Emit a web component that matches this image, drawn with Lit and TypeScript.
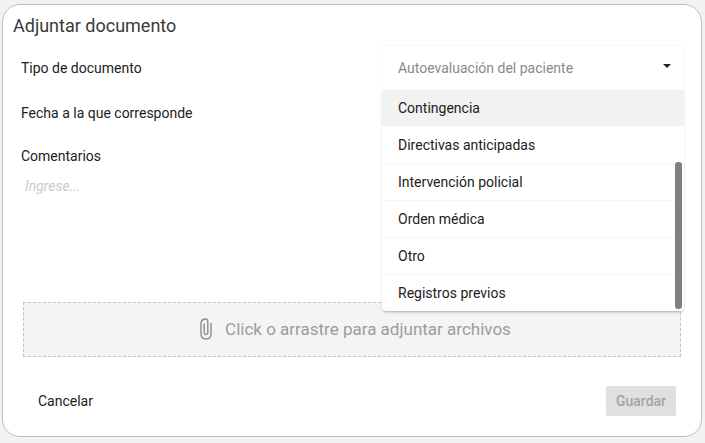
import { LitElement, html, css } from 'lit';
import { customElement } from 'lit/decorators.js';

const options = [
  'Contingencia',
  'Directivas anticipadas',
  'Intervención policial',
  'Orden médica',
  'Otro',
  'Registros previos',
];

@customElement('app-root')
export class AppRoot extends LitElement {
  static styles = css`
    :host {
      display: block;
      width: 705px;
      height: 443px;
      box-sizing: border-box;
      padding: 4px 3px 6px 2px;
      background: #f2f2f2;
      font-family: Roboto, 'Liberation Sans', sans-serif;
      font-size: 14px;
      color: #212121;
    }
    .card {
      box-sizing: border-box;
      height: 433px;
      display: flex;
      flex-direction: column;
      background: #fff;
      border: 1px solid #bdbdbd;
      border-radius: 18px;
      padding: 0 25px 20px 18px;
    }
    .title {
      margin: 0 0 0 -8px;
      padding-top: 10px;
      font-size: 18px;
      font-weight: 400;
      line-height: 21px;
      color: #3a3a3a;
    }
    .form {
      display: grid;
      grid-template-columns: 361px 302px;
      height: 255px;
      margin-right: -8px;
    }
    .left {
      display: flex;
      flex-direction: column;
      padding-top: 23px;
    }
    .label {
      line-height: 18px;
    }
    .label.date {
      margin-top: 27px;
    }
    .label.notes {
      margin-top: 25px;
    }
    .hint {
      margin: 12px 0 0 4px;
      line-height: 18px;
      font-style: italic;
      color: #cbcbcb;
    }
    .right {
      position: relative;
      padding-top: 10px;
    }
    .select {
      box-sizing: border-box;
      height: 44px;
      display: flex;
      align-items: center;
      justify-content: space-between;
      padding: 0 13px 0 16px;
      background: #fff;
      color: #8a8a8a;
      box-shadow: 0 -1px 1px rgba(0, 0, 0, 0.03), 1px 0 1px rgba(0, 0, 0, 0.02), -1px 0 1px rgba(0, 0, 0, 0.02);
    }
    .arrow {
      width: 0;
      height: 0;
      margin-bottom: 5px;
      border-left: 4px solid transparent;
      border-right: 4px solid transparent;
      border-top: 4px solid #212121;
    }
    .menu {
      position: absolute;
      z-index: 2;
      top: 54px;
      left: 0;
      right: 0;
      height: 221px;
      overflow: hidden;
      background: #fff;
      border-radius: 0 0 4px 4px;
      box-shadow: 0 2px 3px -1px rgba(0, 0, 0, 0.3), 0 0 1px rgba(0, 0, 0, 0.08);
    }
    .option {
      box-sizing: border-box;
      height: 37px;
      padding-left: 16px;
      display: flex;
      align-items: center;
      border-bottom: 1px solid #f5f5f5;
      color: #212121;
    }
    .option:first-child {
      background: #f2f2f2;
      border-bottom-color: #fff;
    }
    .scrollbar {
      position: absolute;
      top: 72px;
      right: 2px;
      width: 7px;
      height: 147px;
      border-radius: 3px;
      background: #808080;
    }
    .drop {
      box-sizing: border-box;
      height: 55px;
      margin: 11px -5px 0 2px;
      padding: 0 0 2px 7px;
      display: flex;
      align-items: center;
      justify-content: center;
      gap: 13px;
      border: 1px dashed #c4c4c4;
      background: #f4f4f4;
      color: #9c9c9c;
      font-size: 17px;
    }
    .drop svg {
      display: block;
    }
    .actions {
      margin-top: auto;
      display: flex;
      align-items: center;
      justify-content: space-between;
      padding-left: 17px;
    }
    .cancel {
      border: 0;
      padding: 0;
      background: none;
      font: inherit;
      color: #212121;
    }
    .save {
      width: 70px;
      height: 30px;
      border: 0;
      border-radius: 2px;
      background: #e0e0e0;
      color: #a3a3a3;
      font: inherit;
      font-weight: 500;
    }
  `;

  render() {
    return html`
      <div class="card">
        <h1 class="title">Adjuntar documento</h1>
        <div class="form">
          <div class="left">
            <div class="label">Tipo de documento</div>
            <div class="label date">Fecha a la que corresponde</div>
            <div class="label notes">Comentarios</div>
            <div class="hint">Ingrese...</div>
          </div>
          <div class="right">
            <div class="select">
              <span>Autoevaluación del paciente</span>
              <span class="arrow"></span>
            </div>
            <div class="menu">
              ${options.map((o) => html`<div class="option">${o}</div>`)}
              <div class="scrollbar"></div>
            </div>
          </div>
        </div>
        <div class="drop">
          <svg width="12" height="22" viewBox="0 0 12 22" fill="none" stroke="#8c8c8c" stroke-width="1.4" stroke-linecap="round">
            <path d="M4.2 6V14.5C4.2 15.9 4.9 16.6 6 16.6C7.1 16.6 7.8 15.9 7.8 14.5V4.2C7.8 2.2 7 1 6 1C3 1 1 2.6 1 5.5V15.5C1 19 3 21 6 21C9 21 11 19 11 15.5V5.5" />
          </svg>
          <span>Click o arrastre para adjuntar archivos</span>
        </div>
        <div class="actions">
          <button class="cancel">Cancelar</button>
          <button class="save">Guardar</button>
        </div>
      </div>
    `;
  }
}
